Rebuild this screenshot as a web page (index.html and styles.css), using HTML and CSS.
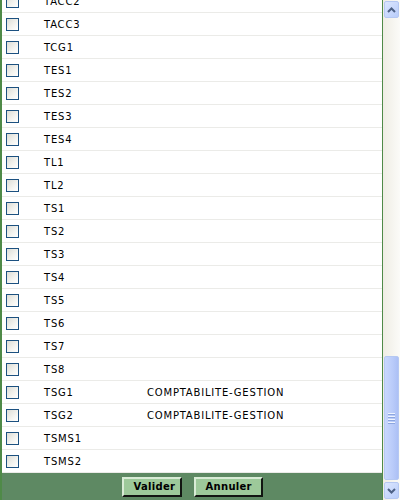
FILE: index.html
```html
<!DOCTYPE html>
<html lang="fr">
<head>
  <meta charset="UTF-8" />
  <title>Sélection des classes</title>
  <link rel="stylesheet" href="styles.css">
</head>
<body>
  <div class="frame">
    <div class="panel">
      <div class="list">
        <div class="row"><span class="check"></span><span class="code">TACC2</span></div>
        <div class="row"><span class="check"></span><span class="code">TACC3</span></div>
        <div class="row"><span class="check"></span><span class="code">TCG1</span></div>
        <div class="row"><span class="check"></span><span class="code">TES1</span></div>
        <div class="row"><span class="check"></span><span class="code">TES2</span></div>
        <div class="row"><span class="check"></span><span class="code">TES3</span></div>
        <div class="row"><span class="check"></span><span class="code">TES4</span></div>
        <div class="row"><span class="check"></span><span class="code">TL1</span></div>
        <div class="row"><span class="check"></span><span class="code">TL2</span></div>
        <div class="row"><span class="check"></span><span class="code">TS1</span></div>
        <div class="row"><span class="check"></span><span class="code">TS2</span></div>
        <div class="row"><span class="check"></span><span class="code">TS3</span></div>
        <div class="row"><span class="check"></span><span class="code">TS4</span></div>
        <div class="row"><span class="check"></span><span class="code">TS5</span></div>
        <div class="row"><span class="check"></span><span class="code">TS6</span></div>
        <div class="row"><span class="check"></span><span class="code">TS7</span></div>
        <div class="row"><span class="check"></span><span class="code">TS8</span></div>
        <div class="row"><span class="check"></span><span class="code">TSG1</span><span class="label">COMPTABILITE-GESTION</span></div>
        <div class="row"><span class="check"></span><span class="code">TSG2</span><span class="label">COMPTABILITE-GESTION</span></div>
        <div class="row"><span class="check"></span><span class="code">TSMS1</span></div>
        <div class="row"><span class="check"></span><span class="code">TSMS2</span></div>
      </div>
      <div class="footer">
        <button class="btn">Valider</button>
        <button class="btn">Annuler</button>
      </div>
    </div>

    <div class="scrollbar">
      <div class="sb-btn">
        <svg width="9" height="6" viewBox="0 0 9 6"><path d="M1 5 L4.5 1.5 L8 5" fill="none" stroke="#4d6185" stroke-width="2"/></svg>
      </div>
      <div class="sb-track">
        <div class="sb-thumb">
          <span class="grip"></span><span class="grip"></span><span class="grip"></span><span class="grip"></span>
        </div>
      </div>
      <div class="sb-btn">
        <svg width="9" height="6" viewBox="0 0 9 6"><path d="M1 1 L4.5 4.5 L8 1" fill="none" stroke="#4d6185" stroke-width="2"/></svg>
      </div>
    </div>
  </div>
</body>
</html>
```

FILE: styles.css
```css
body {
  margin: 0;
  padding: 0;
  background: white;
  font-family: "DejaVu Sans", Verdana, sans-serif;
}

.frame {
  display: flex;
  width: 400px;
  height: 500px;
  overflow: hidden;
}

.panel {
  width: 380px;
  display: flex;
  flex-direction: column;
  border-left: 2px solid #4f8a48;
  border-right: 1px solid #4f8a48;
}

.list {
  flex: 1;
  display: flex;
  flex-direction: column;
  justify-content: flex-end;
  overflow: hidden;
}

.row {
  flex-shrink: 0;
  display: flex;
  align-items: center;
  height: 22px;
  border-bottom: 1px solid #ebebe8;
  font-size: 10px;
  color: #000;
}

.check {
  width: 11px;
  height: 11px;
  margin-left: 4px;
  margin-top: 1px;
  border: 1px solid #1c5180;
  background: linear-gradient(135deg, #dcdcd5 0%, #f4f4f0 60%, #ffffff 100%);
}

.code {
  width: 103px;
  margin-left: 25px;
  margin-top: 1px;
  letter-spacing: 0.8px;
}

.label {
  margin-top: 1px;
  letter-spacing: 0.8px;
}

.footer {
  height: 27px;
  flex-shrink: 0;
  background: #5e8963;
  display: flex;
  justify-content: center;
  align-items: center;
  gap: 12px;
}

.btn {
  height: 20px;
  padding: 0 10px;
  background: #9dc99a;
  border: 2px outset #d9ecd6;
  border-right-color: #5a6a58;
  border-bottom-color: #5a6a58;
  font-family: "DejaVu Sans", Verdana, sans-serif;
  font-size: 10px;
  font-weight: bold;
  letter-spacing: 0.3px;
  color: #000;
}

.btn:first-child {
  width: 60px;
}

.btn:last-child {
  width: 69px;
}

.scrollbar {
  width: 17px;
  display: flex;
  flex-direction: column;
  background: linear-gradient(90deg, #efede4, #fbfbf8);
}

.sb-btn {
  height: 15px;
  margin: 1px;
  display: flex;
  justify-content: center;
  align-items: center;
  border: 1px solid #b5c8f2;
  border-radius: 2px;
  background: linear-gradient(135deg, #dbe6fe, #b9cdfa);
}

.sb-track {
  flex: 1;
  display: flex;
  flex-direction: column;
  justify-content: flex-end;
}

.sb-thumb {
  height: 122px;
  margin: 0 1px 1px;
  border: 1px solid #b5c8f2;
  border-radius: 2px;
  background: linear-gradient(90deg, #c8d7fd, #b9cbf9 60%, #acc0f5);
  display: flex;
  flex-direction: column;
  justify-content: center;
  align-items: center;
  gap: 1px;
}

.grip {
  width: 7px;
  height: 1px;
  background: #eef3fe;
  border-bottom: 1px solid #8ca6e0;
}
```
